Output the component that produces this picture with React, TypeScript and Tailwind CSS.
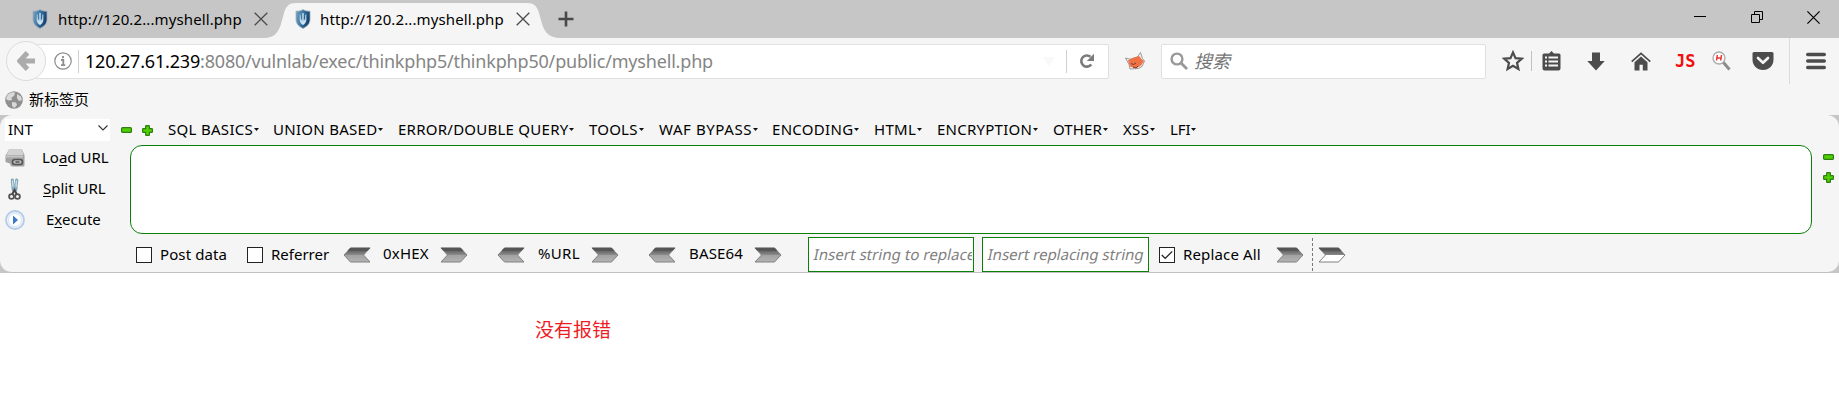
import React from "react";

const MENUS: { label: string; cell: string; tracking: string }[] = [
  { label: "SQL BASICS", cell: "w-[105px]", tracking: "tracking-[0.3px]" },
  { label: "UNION BASED", cell: "w-[125px]", tracking: "tracking-[0.28px]" },
  { label: "ERROR/DOUBLE QUERY", cell: "w-[191px]", tracking: "tracking-[0.25px]" },
  { label: "TOOLS", cell: "w-[70px]", tracking: "tracking-[0.2px]" },
  { label: "WAF BYPASS", cell: "w-[113px]", tracking: "tracking-[0.58px]" },
  { label: "ENCODING", cell: "w-[102px]", tracking: "tracking-[0.3px]" },
  { label: "HTML", cell: "w-[63px]", tracking: "tracking-[0.3px]" },
  { label: "ENCRYPTION", cell: "w-[116px]", tracking: "tracking-[0.25px]" },
  { label: "OTHER", cell: "w-[70px]", tracking: "tracking-[0.1px]" },
  { label: "XSS", cell: "w-[47px]", tracking: "tracking-[0.3px]" },
  { label: "LFI", cell: "w-[40px]", tracking: "tracking-[-0.1px]" },
];

function Shield() {
  return (
    <svg width="16" height="20" viewBox="0 0 16 20" className="shrink-0">
      <defs>
        <linearGradient id="sh" x1="0" x2="1" y1="0" y2="0.3">
          <stop offset="0" stopColor="#7fa3bb" />
          <stop offset="0.5" stopColor="#3b78a8" />
          <stop offset="1" stopColor="#163e6c" />
        </linearGradient>
        <linearGradient id="sv" x1="0" x2="0" y1="0" y2="1">
          <stop offset="0" stopColor="#7fb0d4" />
          <stop offset="1" stopColor="#e3eef5" />
        </linearGradient>
      </defs>
      <path d="M1 2.200C4 2.400 6 1.600 8 .600c2 1 4 1.800 7 1.600v8c0 4.600-3 7.300-7 9.200-4-1.900-7-4.600-7-9.200z" fill="url(#sh)" stroke="#9fb0bb" strokeWidth=".8" />
      <path d="M4.600 5v5.500c0 2.500 1.400 4.200 3.400 5.500 2-1.300 3.400-3 3.400-5.500V5L10 6v4L8 12 6 10V6z" fill="url(#sv)" />
      <path d="M8 4v8" stroke="#c3dcec" strokeWidth="1.500" />
    </svg>
  );
}

function Cross() {
  return (
    <svg width="14" height="14" viewBox="0 0 14 14" className="shrink-0">
      <path d="M.7.700l12.600 12.600M13.300.700L.7 13.300" stroke="#4b4b4b" strokeWidth="1.300" />
    </svg>
  );
}

function Minus() {
  return (
    <svg width="11" height="6" viewBox="0 0 11 6" className="shrink-0">
      <rect x=".6" y=".6" width="9.800" height="4.800" rx="1" fill="#4fd000" stroke="#2f7d14" strokeWidth="1.200" />
    </svg>
  );
}

function Plus() {
  return (
    <svg width="11" height="11" viewBox="0 0 11 11" className="shrink-0">
      <path d="M3.600 1.200q0-.6.6-.6h2.600q.6 0 .6.6v2.400h2.400q.6 0 .6.6v2.600q0 .6-.6.6H7.400v2.400q0 .6-.6.6H4.200q-.6 0-.6-.6V7.400H1.200q-.6 0-.6-.6V4.200q0-.6.6-.6h2.400z" fill="#4fd000" stroke="#2f7d14" strokeWidth="1.200" />
    </svg>
  );
}

function Arrow({ left = false, hollow = false }: { left?: boolean; hollow?: boolean }) {
  const id = hollow ? "ag-h" : "ag";
  return (
    <svg width="28" height="16" viewBox="0 0 28 16" className={left ? "shrink-0 -scale-x-100" : "shrink-0"}>
      <defs>
        <linearGradient id={id} x1="0" x2="0" y1="0" y2="1">
          <stop offset="0" stopColor="#4a4a4a" />
          <stop offset="0.500" stopColor={hollow ? "#8a8a8a" : "#8d8d8d"} />
          <stop offset="0.520" stopColor={hollow ? "#ffffff" : "#a2a2a2"} />
          <stop offset="1" stopColor={hollow ? "#ffffff" : "#b4b4b4"} />
        </linearGradient>
      </defs>
      <path d="M1 1h19.500l6.500 7-6.500 7H1l6.500-7z" fill={`url(#${id})`} stroke="#808080" strokeWidth="1" />
      <path d="M.5.700h20l3 3H3.500z" fill="#555" />
    </svg>
  );
}

function Box({ checked = false }: { checked?: boolean }) {
  return (
    <span className="flex size-4 shrink-0 items-center justify-center border border-[#222] bg-white">
      {checked && (
        <svg width="12" height="10" viewBox="0 0 12 10">
          <path d="M.8 5l3.400 3.400L11.200 1.400" fill="none" stroke="#222" strokeWidth="1.300" />
        </svg>
      )}
    </span>
  );
}

function TabBar() {
  return (
    <div className="flex h-[38px] bg-[#c6c6c6] text-[15px] tracking-[0.11px]">
      <div className="flex h-[38px] w-[264px] items-center pl-8">
        <Shield />
        <span className="ml-[10px] w-[196px] shrink-0 whitespace-nowrap">http://120.2...myshell.php</span>
        <Cross />
      </div>
      <div className="relative flex w-[296px] items-center pl-[31px]">
        <svg width="296" height="38" viewBox="0 0 296 38" className="absolute inset-0">
          <path d="M0 38C10 38 14 33 17 24L20 13C22 6 25 3 32 3H263C270 3 273 6 275 13L278 24C281 33 286 38 296 38z" fill="#f5f5f5" />
        </svg>
        <span className="relative flex items-center">
          <Shield />
          <span className="ml-[9px] w-[196px] shrink-0 whitespace-nowrap">http://120.2...myshell.php</span>
          <Cross />
        </span>
      </div>
      <svg width="16" height="16" viewBox="0 0 16 16" className="-ml-[2px] mt-[11px]">
        <path d="M8 .5v15M.5 8h15" stroke="#484848" strokeWidth="2.600" />
      </svg>
      <div className="ml-auto flex h-[34px] items-center pr-[19px]">
        <svg width="12" height="12" viewBox="0 0 12 12" className="mr-[45px]"><path d="M0 5.500h12" stroke="#000" /></svg>
        <svg width="12" height="12" viewBox="0 0 12 12" className="mr-[44px]">
          <path d="M.5 3.500h8v8h-8zM3.500 3.500v-3h8v8h-3" fill="none" stroke="#000" />
        </svg>
        <svg width="13" height="13" viewBox="0 0 13 13"><path d="M.4.400l12.200 12.200M12.600.400L.4 12.600" stroke="#000" strokeWidth="1.200" /></svg>
      </div>
    </div>
  );
}

function NavBar() {
  return (
    <div className="flex h-[46px] items-center pl-[6px]">
      <div className="relative z-10 flex size-10 shrink-0 items-center justify-center rounded-full border border-[#dcdcdc] bg-[#f7f7f7]">
        <svg width="18" height="20" viewBox="0 0 18 20">
          <path d="M10.500 1.800L2.800 10l7.700 8.200M3.500 10H18" fill="none" stroke="#acacac" strokeWidth="5" />
        </svg>
      </div>
      <div className="-ml-[11px] flex h-[35px] w-[1074px] shrink-0 items-center rounded-[2px] border border-[#e0e0e0] bg-white pl-[18px]">
        <svg width="18" height="18" viewBox="0 0 18 18" className="shrink-0">
          <circle cx="9" cy="9" r="8.200" fill="none" stroke="#8d8d8d" strokeWidth="1.200" />
          <path d="M9 4v2.200M7 8h2.300v5M7 13.100h4.200" fill="none" stroke="#8d8d8d" strokeWidth="1.800" />
        </svg>
        <span className="ml-[6px] h-[23px] w-px shrink-0 bg-[#cfcfcf]" />
        <span className="ml-[6px] whitespace-nowrap text-[18px] tracking-[-0.185px] text-[#858585]">
          <span className="text-black">120.27.61.239</span>:8080/vulnlab/exec/thinkphp5/thinkphp50/public/myshell.php
        </span>
        <svg width="12" height="9" viewBox="0 0 12 9" className="ml-auto"><path d="M0 0h12L6 9z" fill="#f9f9f9" /></svg>
        <span className="ml-[11px] h-[23px] w-px bg-[#cfcfcf]" />
        <svg width="16" height="16" viewBox="0 0 16 16" className="ml-3 mr-[13px]">
          <path d="M12.300 11.500A5.600 5.600 0 1 1 11.500 3.800" fill="none" stroke="#7b7b7b" strokeWidth="2.600" />
          <path d="M15 .8v7.100H7.800z" fill="#7b7b7b" />
        </svg>
      </div>
      <svg width="20" height="18" viewBox="0 0 20 18" className="ml-4 shrink-0">
        <path d="M.5 6L5 7.200 12.500 5 15.500.500 17.500 6.500 19.500 9 17 14.500 13.500 16.500 5 17 4 12.500z" fill="#eee" stroke="#8b8582" strokeWidth=".8" />
        <path d="M3 8.300L9 5.500 14 4l2.500 3L19 9l-3 4.500-5 3L5 14.500z" fill="#ef7146" />
        <path d="M6 11.500l2.500 1 2.500-1.500M8 15l3 1 2-2" fill="none" stroke="#51352c" strokeWidth=".8" />
      </svg>
      <div className="ml-4 flex h-[35px] w-[325px] shrink-0 items-center rounded-[2px] border border-[#e0e0e0] bg-white pl-2">
        <svg width="18" height="18" viewBox="0 0 18 18">
          <circle cx="7" cy="7" r="5.400" fill="none" stroke="#999" strokeWidth="2.400" />
          <path d="M11 11l6 6" stroke="#999" strokeWidth="2.800" />
        </svg>
        <span className="ml-[6px] text-[18px] italic text-[#757575]">搜索</span>
      </div>
      <svg width="22" height="22" viewBox="0 0 22 22" className="ml-[16px] shrink-0">
        <path d="M11 2.400l2.500 5.700 6.200.6-4.700 4.100 1.400 6.100L11 15.700l-5.400 3.200L7 12.800 2.300 8.700l6.200-.6z" fill="none" stroke="#4c4c4c" strokeWidth="2.200" />
      </svg>
      <span className="ml-[7px] h-5 w-px shrink-0 bg-[#c2c2c2]" />
      <svg width="19" height="20" viewBox="0 0 19 20" className="ml-[10px] shrink-0">
        <path d="M7 2.500L9.500 0 12 2.500h5q1.500 0 1.500 1.500v13.500q0 2-2 2h-14q-2 0-2-2V4Q.5 2.500 2 2.500z" fill="#4c4c4c" />
        <path d="M3 6.500h2M6.500 6.500h9.500M3 10.500h2M6.500 10.500h9.500M3 14.500h2M6.500 14.500h9.500" stroke="#f5f5f5" strokeWidth="2" />
      </svg>
      <svg width="18" height="19" viewBox="0 0 18 19" className="ml-[26px] shrink-0">
        <path d="M5 .500h8V9h4.700L9 18.500.300 9H5z" fill="#4c4c4c" />
      </svg>
      <svg width="20" height="19" viewBox="0 0 20 19" className="ml-[26px] shrink-0">
        <path d="M.7 9.700L10 1.300l9.300 8.400" fill="none" stroke="#4c4c4c" strokeWidth="1.700" />
        <path d="M3.500 10.200L10 4.400l6.500 5.800v8.300h-4.700v-5.700H8.500v5.700h-5z" fill="#4c4c4c" />
      </svg>
      <span className="ml-6 w-[21px] shrink-0 whitespace-nowrap font-['DejaVu_Sans_Mono',monospace] text-[17px] font-bold leading-5 text-[#f01010]">JS</span>
      <svg width="19" height="20" viewBox="0 0 19 20" className="ml-4 shrink-0">
        <path d="M11 11l6.500 7.500" stroke="#8c8c8c" strokeWidth="3" />
        <circle cx="7" cy="7" r="6" fill="#fff" stroke="#aaa" strokeWidth="1.300" />
        <path d="M5.300 4L4.500 9.500M9.500 4L8.700 9.500M5 7h4" stroke="#e33" strokeWidth="1.500" />
      </svg>
      <svg width="22" height="18" viewBox="0 0 22 18" className="ml-[21px] shrink-0">
        <path d="M2 0h18q1.500 0 1.500 1.500V7.500C21.500 13.500 17 18 11 18S.5 13.500.5 7.500V1.500Q.5 0 2 0z" fill="#4c4c4c" />
        <path d="M6 6l5 4.800L16 6" fill="none" stroke="#f5f5f5" strokeWidth="2.600" strokeLinecap="round" strokeLinejoin="round" />
      </svg>
      <span className="ml-[15px] h-[46px] w-px shrink-0 bg-[#dadada]" />
      <svg width="20" height="18" viewBox="0 0 20 18" className="ml-4 shrink-0">
        <path d="M1.700 2.500h16.600M1.700 9h16.600M1.700 15.500h16.600" stroke="#4c4c4c" strokeWidth="3.400" strokeLinecap="round" />
      </svg>
    </div>
  );
}

function BookmarkBar() {
  return (
    <div className="flex h-[31px] items-center pl-[5px] text-[15px]">
      <svg width="18" height="18" viewBox="0 0 18 18">
        <circle cx="9" cy="9" r="8.800" fill="#8f8f8f" />
        <path d="M3 3.500Q6 .800 10 1.500L9 5 6.500 6.500 7 9 3.500 9.500 1 8Q1.300 5 3 3.500zM12 3l4 2.500L17 9l-3 1-2-3zM7 11l4 .5 1 2.500-2.500 3L7 15z" fill="#d9d9d9" />
      </svg>
      <span className="ml-[6px]">新标签页</span>
    </div>
  );
}

function HackBar() {
  return (
    <div className="bg-[#c6c6c6]">
      <div className="flex h-[158px] flex-col rounded-[12px] border-b border-[#c0c0c0] bg-[#f5f5f5] text-[15px]">
        <div className="flex h-[30px] shrink-0 items-center pl-[5px]">
          <div className="flex h-[22px] w-[105px] items-center justify-between bg-white pl-[3px] pr-[2px]">
            <span className="pb-[2px]">INT</span>
            <svg width="10" height="6" viewBox="0 0 10 6" className="-mt-1"><path d="M.5.500L5 5 9.500.500" fill="none" stroke="#333" strokeWidth="1.100" /></svg>
          </div>
          <span className="ml-[11px] mr-[10px]"><Minus /></span>
          <Plus />
          <div className="ml-[15px] flex pb-[2px]">
            {MENUS.map((m) => (
              <span key={m.label} className={`flex items-center whitespace-nowrap ${m.cell} ${m.tracking}`}>
                {m.label}
                <svg width="5" height="3" viewBox="0 0 5 3" className="ml-px shrink-0"><path d="M0 0h5L2.500 3z" fill="#111" /></svg>
              </span>
            ))}
          </div>
        </div>
        <div className="flex h-[89px] shrink-0">
          <div className="flex w-[130px] shrink-0 flex-col">
            <div className="flex h-[26px] items-center pl-[5px]">
              <svg width="20" height="18" viewBox="0 0 20 18">
                <path d="M4 .5h13L19.500 6v10q0 1.500-1.500 1.500H7Q5.500 17.500 5 14.500L.5 13V6.500z" fill="#a2a2a2" />
                <path d="M4 .500h13L18.500 6H1.500z" fill="#d2d2d2" />
                <path d="M1 6.500h17v2H1z" fill="#c4c4c4" />
                <rect x="7.500" y="10.500" width="10" height="5" rx="2.500" fill="#bbb" stroke="#555" strokeWidth="1.600" />
                <path d="M10.500 13h4" stroke="#444" strokeWidth="1.300" />
              </svg>
              <span className="ml-[17px] whitespace-nowrap pb-[2px]">Lo<u className="underline-offset-2">a</u>d URL</span>
            </div>
            <div className="flex h-[36px] items-center pl-[8px]">
              <svg width="13" height="22" viewBox="0 0 13 22">
                <path d="M4.300 2L5.300 12M8.700 2L7.700 12" stroke="#86a9b9" strokeWidth="3.200" strokeLinecap="round" />
                <path d="M4.500 2.500L5 9M8.500 2.500L8 9" stroke="#cfe2ea" strokeWidth="1.200" />
                <circle cx="3.500" cy="18.500" r="2.400" fill="none" stroke="#555" strokeWidth="1.800" />
                <circle cx="9.500" cy="18.500" r="2.400" fill="none" stroke="#555" strokeWidth="1.800" />
                <path d="M4.300 16l2.200-4 2.200 4" fill="none" stroke="#444" strokeWidth="2" />
              </svg>
              <span className="ml-[22px] whitespace-nowrap pb-[2px]"><u className="underline-offset-2">S</u>plit URL</span>
            </div>
            <div className="flex h-[26px] items-center pl-[5px]">
              <svg width="20" height="20" viewBox="0 0 20 20">
                <circle cx="10" cy="10" r="9" fill="#eef4fb" stroke="#b4cbe8" strokeWidth="1.800" />
                <circle cx="10" cy="10" r="6.500" fill="#fff" stroke="#d4e2f2" />
                <path d="M8 5.500L13 10l-5 4.500z" fill="#3f78c4" />
              </svg>
              <span className="ml-[21px] whitespace-nowrap pb-[2px]">E<u className="underline-offset-2">x</u>ecute</span>
            </div>
          </div>
          <div className="h-[89px] w-[1682px] shrink-0 rounded-[12px] border border-[#0a800a] bg-white" />
          <div className="flex flex-col gap-3 pl-[11px] pt-[9px]">
            <Minus />
            <Plus />
          </div>
        </div>
        <div className="mt-[3px] flex h-[35px] items-center whitespace-nowrap pl-[136px]">
          <Box />
          <span className="ml-2 w-[87px] shrink-0 tracking-[0.1px]">Post data</span>
          <Box />
          <span className="ml-2 w-[72px] shrink-0">Referrer</span>
          <Arrow left />
          <span className="ml-3 w-[57px] shrink-0 pb-[2px] tracking-[0.2px]">0xHEX</span>
          <Arrow />
          <span className="w-[29px]" />
          <Arrow left />
          <span className="ml-[13px] w-[53px] shrink-0 pb-[2px] tracking-[0.3px]">%URL</span>
          <Arrow />
          <span className="w-[29px]" />
          <Arrow left />
          <span className="ml-[13px] w-[65px] shrink-0 pb-[2px] tracking-[0.15px]">BASE64</span>
          <Arrow />
          <div className="ml-[26px] flex h-[35px] w-[166px] shrink-0 items-center overflow-hidden border border-[#0a800a] bg-white px-[1px] text-[#808080]">
            <span className="w-full overflow-hidden pl-1">
              <span className="inline-block -skew-x-12 tracking-[0.05px]">Insert string to replace</span>
            </span>
          </div>
          <div className="ml-2 flex h-[35px] w-[167px] shrink-0 items-center border border-[#0a800a] bg-white pl-[5px] text-[#808080]">
            <span className="inline-block -skew-x-12">Insert replacing string</span>
          </div>
          <span className="ml-[10px]"><Box checked /></span>
          <span className="ml-2 w-[93px] shrink-0 tracking-[0.15px]">Replace All</span>
          <Arrow />
          <span className="ml-2 h-[33px] border-l border-dashed border-[#777]" />
          <span className="ml-[5px]"><Arrow hollow /></span>
        </div>
      </div>
    </div>
  );
}

export default function App() {
  return (
    <div className="h-[405px] w-[1839px] overflow-hidden bg-white font-['Noto_Sans','Noto_Sans_CJK_SC',sans-serif] text-black">
      <div className="bg-[#f5f5f5]">
        <TabBar />
        <NavBar />
        <BookmarkBar />
      </div>
      <HackBar />
      <p className="pl-[535px] pt-[43px] text-[19px] leading-[28px] text-[#ed1c24]">没有报错</p>
    </div>
  );
}
